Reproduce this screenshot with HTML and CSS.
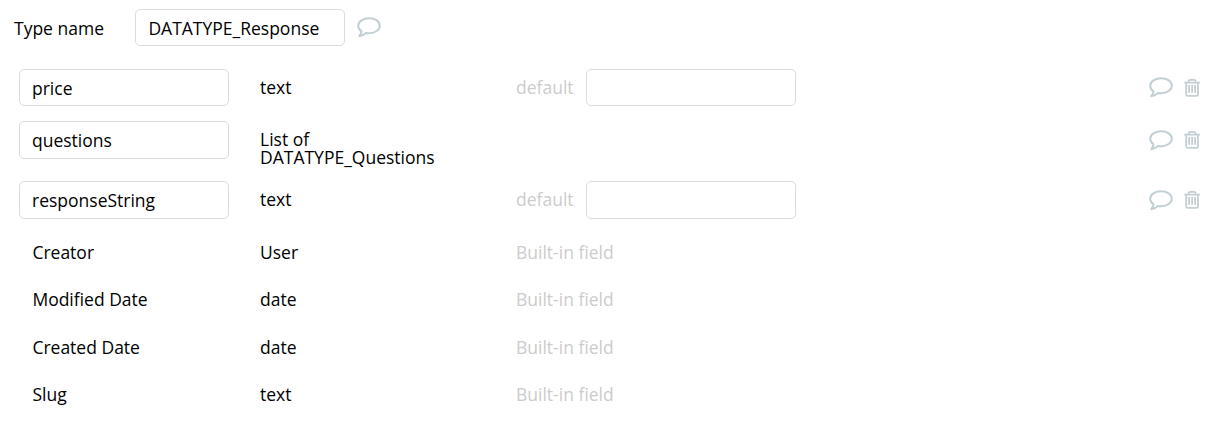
FILE: index.html
```html
<!DOCTYPE html>
<html lang="en">
<head>
    <meta charset="UTF-8" />
    <meta name="viewport" content="width=device-width, initial-scale=1.0" />
    <title>Data types</title>
    <link rel="stylesheet" href="styles.css">
</head>
<body>
    <!-- Shared icons -->
    <svg class="icon-defs" width="0" height="0">
        <symbol id="icon-comment" viewBox="0 0 24 21">
            <path d="M12.2 1.2C18.2 1.2 22.8 4.5 22.8 8.7S18.2 16.2 12.2 16.2C11.1 16.2 10 16.1 9 15.9C7.4 17.6 5.2 18.9 2.3 19.2C3.6 17.8 4.4 16.3 4.5 14.4C2.5 13 1.2 11 1.2 8.7C1.2 4.5 6.1 1.2 12.2 1.2Z" />
        </symbol>
        <symbol id="icon-trash" viewBox="0 0 16 19">
            <path d="M0.3 4.6H15.9M4.7 4.4V3.2Q4.7 1.8 6.2 1.8H10Q11.5 1.8 11.5 3.2V4.4M2.2 4.8V16Q2.2 17.8 3.8 17.8H12.4Q14 17.8 14 16V4.8M5.1 7V14.8M8.1 7V14.8M11.1 7V14.8" />
        </symbol>
    </svg>

    <div class="type-header">
        <label class="type-label" for="typeName">Type name</label>
        <input class="input" id="typeName" type="text" value="DATATYPE_Response">
        <svg class="icon comment"><use href="#icon-comment" /></svg>
    </div>

    <div class="fields">
        <div class="field">
            <input class="input" type="text" value="price">
            <div class="field-type">text</div>
            <div class="field-note">default</div>
            <input class="input" type="text">
            <div class="actions">
                <svg class="icon comment"><use href="#icon-comment" /></svg>
                <svg class="icon trash"><use href="#icon-trash" /></svg>
            </div>
        </div>

        <div class="field tall field-list">
            <input class="input" type="text" value="questions">
            <div class="field-type">List of DATATYPE_Questions</div>
            <div class="actions">
                <svg class="icon comment"><use href="#icon-comment" /></svg>
                <svg class="icon trash"><use href="#icon-trash" /></svg>
            </div>
        </div>

        <div class="field tall">
            <input class="input" type="text" value="responseString">
            <div class="field-type">text</div>
            <div class="field-note">default</div>
            <input class="input" type="text">
            <div class="actions">
                <svg class="icon comment"><use href="#icon-comment" /></svg>
                <svg class="icon trash"><use href="#icon-trash" /></svg>
            </div>
        </div>

        <div class="field built-in">
            <div class="field-name">Creator</div>
            <div class="field-type">User</div>
            <div class="field-note">Built-in field</div>
        </div>
        <div class="field built-in">
            <div class="field-name">Modified Date</div>
            <div class="field-type">date</div>
            <div class="field-note">Built-in field</div>
        </div>
        <div class="field built-in">
            <div class="field-name">Created Date</div>
            <div class="field-type">date</div>
            <div class="field-note">Built-in field</div>
        </div>
        <div class="field built-in">
            <div class="field-name">Slug</div>
            <div class="field-type">text</div>
            <div class="field-note">Built-in field</div>
        </div>
    </div>
</body>
</html>
```
FILE: styles.css
```css
* {
    box-sizing: border-box;
}

body {
    margin: 0;
    background: #ffffff;
    color: #000000;
    font-family: "Open Sans", sans-serif;
    font-size: 17.5px;
    line-height: 18px;
}

.icon-defs {
    display: none;
}

.input {
    width: 210px;
    height: 37px;
    padding: 1px 12px 0;
    border: 1px solid #dddddd;
    border-radius: 5px;
    background: #ffffff;
    color: inherit;
    font: inherit;
}

.icon {
    flex: none;
    fill: none;
    stroke: #c2d0d5;
    stroke-width: 2;
    stroke-linejoin: round;
}

.comment {
    width: 24px;
    height: 21px;
}

.trash {
    width: 16px;
    height: 19px;
    stroke-width: 1.8;
}

.type-header {
    display: flex;
    align-items: center;
    padding: 9px 0 0 14px;
}

.type-label {
    width: 121.4px;
    padding-top: 1px;
}

.type-header .comment {
    margin-left: 11.6px;
}

.fields {
    padding: 23px 32px 0 19px;
}

.field {
    display: grid;
    grid-template-columns: 241px 256px 70px 210px 1fr;
    align-items: start;
    height: 52px;
}

.field-type,
.field-note,
.field-name {
    padding-top: 9.4px;
}

.field-type {
    padding-right: 60px;
}

.field-name {
    padding-left: 13.4px;
}

.field-note {
    color: #cccccc;
    white-space: nowrap;
}

.actions {
    display: flex;
    grid-column: 5;
    align-items: center;
    justify-content: flex-end;
    gap: 11px;
    padding-top: 8px;
}

.tall {
    height: 52.5px;
}

.tall .input {
    height: 38px;
    padding-top: 0;
    padding-bottom: 1px;
}

.tall .actions {
    padding-top: 9px;
}

.tall .trash {
    margin-bottom: 2px;
}

.field-list {
    height: 60px;
}

.built-in {
    height: 47.5px;
}
```
